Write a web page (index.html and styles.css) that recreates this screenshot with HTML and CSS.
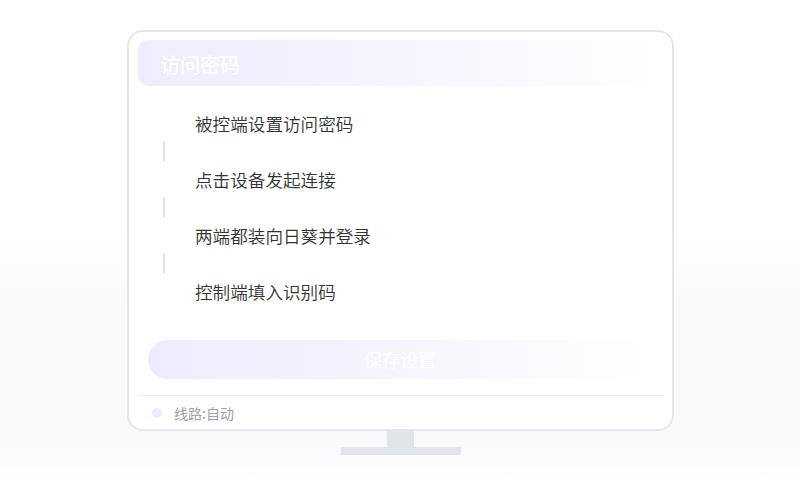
FILE: index.html
```html
<!DOCTYPE html>
<html lang="zh-CN">
<head>
<meta charset="utf-8">
<title>访问密码</title>
<link rel="stylesheet" href="styles.css">
</head>
<body>
<div class="monitor">
  <div class="screen">
    <div class="header">
      <span class="header-title">访问密码</span>
      <span class="header-extra">未设置</span>
    </div>
    <div class="steps">
      <div class="step">被控端设置访问密码</div>
      <div class="connector"></div>
      <div class="step">点击设备发起连接</div>
      <div class="connector"></div>
      <div class="step">两端都装向日葵并登录</div>
      <div class="connector"></div>
      <div class="step">控制端填入识别码</div>
    </div>
    <div class="save-btn">保存设置</div>
    <div class="divider"></div>
    <div class="footer">
      <span class="dot"></span>
      <span class="footer-text">线路:自动</span>
    </div>
  </div>
  <div class="neck"></div>
  <div class="base"></div>
</div>
</body>
</html>
```

FILE: styles.css
```css
html, body {
  margin: 0;
  padding: 0;
}
body {
  width: 800px;
  height: 500px;
  overflow: hidden;
  font-family: "Noto Sans CJK SC", "Noto Sans", sans-serif;
  background: linear-gradient(180deg, #ffffff 0%, #ffffff 46%, #f8f9fb 62%, #f8f9fb 88%, #ffffff 96%);
}
.monitor {
  width: 547px;
  margin: 30px 0 0 127px;
  display: flex;
  flex-direction: column;
  align-items: center;
}
.screen {
  box-sizing: border-box;
  width: 547px;
  height: 401px;
  border: 2px solid #e3e6eb;
  border-radius: 16px;
  background: #ffffff;
  padding: 8px 9px 0 9px;
  display: flex;
  flex-direction: column;
}
.header {
  height: 46px;
  border-radius: 10px;
  background: linear-gradient(90deg, #efecfd 0%, #f6f4fe 50%, #ffffff 100%);
  display: flex;
  align-items: center;
  justify-content: space-between;
  padding: 3px 22px 0 22px;
  box-sizing: border-box;
}
.header-title {
  color: #ffffff;
  font-size: 20px;
  font-weight: 500;
  line-height: 24px;
}
.header-extra {
  color: #ffffff;
  font-size: 14px;
}
.steps {
  margin-top: 26px;
  display: flex;
  flex-direction: column;
}
.step {
  padding-left: 57px;
  font-size: 17.6px;
  font-weight: 350;
  line-height: 24px;
  height: 24px;
  color: #333333;
}
.connector {
  width: 2px;
  height: 20px;
  margin: 5px 0 7px 25px;
  background: #e2e3e8;
}
.save-btn {
  margin: 36px 0 0 10px;
  width: 504px;
  height: 39px;
  border-radius: 20px;
  background: linear-gradient(90deg, #efebfd 0%, #f6f4fe 50%, #ffffff 100%);
  color: #ffffff;
  font-size: 18px;
  line-height: 24px;
  padding-bottom: 2px;
  box-sizing: border-box;
  display: flex;
  align-items: center;
  justify-content: center;
}
.divider {
  margin-top: 16px;
  height: 1px;
  background: #eceef2;
}
.footer {
  height: 33px;
  display: flex;
  align-items: center;
  padding-left: 14px;
  gap: 12px;
}
.dot {
  width: 10px;
  height: 10px;
  border-radius: 50%;
  background: #eeebfd;
}
.footer-text {
  font-size: 14px;
  color: #9ea1a9;
}
.neck {
  width: 27px;
  height: 16px;
  background: #e1e4e8;
}
.base {
  width: 120px;
  height: 8px;
  background: #e1e4e8;
}
```
